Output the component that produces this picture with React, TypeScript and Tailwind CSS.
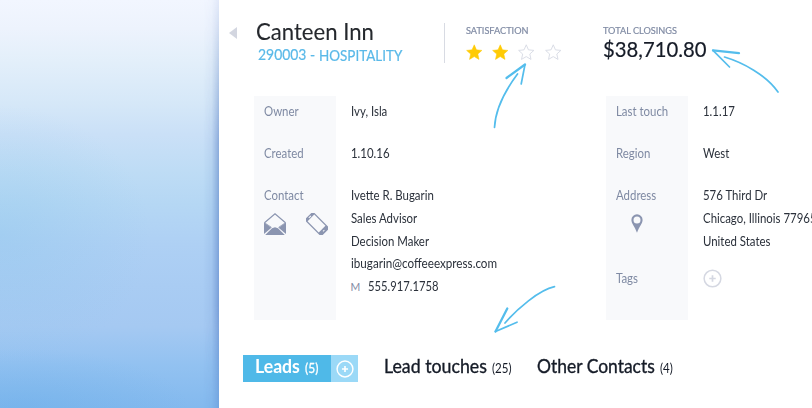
import React from "react";

const STAR = "M12 1.2l3.2 7.3 7.9.8-5.9 5.3 1.7 7.8L12 18.3l-6.9 4.1 1.7-7.8L.9 9.3l7.9-.8z";

function Star({ filled }: { filled?: boolean }) {
  return (
    <svg viewBox="0 0 24 24" className="size-[16.5px] shrink-0">
      <path
        d={STAR}
        fill={filled ? "#ffcb05" : "#fff"}
        stroke={filled ? "#ffcb05" : "#d9dce5"}
        strokeWidth={filled ? 0.8 : 1.4}
      />
    </svg>
  );
}

function PlusCircle({ className }: { className: string }) {
  return (
    <svg viewBox="0 0 20 20" fill="none" stroke="currentColor" className={className}>
      <circle cx="10" cy="10" r="8.8" strokeWidth="1.6" />
      <path d="M10 6.600v6.800M6.600 10h6.800" strokeWidth="1.8" />
    </svg>
  );
}

function Envelope() {
  return (
    <svg viewBox="0 0 22 22" className="size-[22px]" fill="#8b95b0">
      <path d="M.5 9.700 11 .8l10.500 8.900" fill="none" stroke="#8b95b0" strokeWidth="1.200" />
      <path d="M0 9.500v11.500l7.400-6.300zM22 9.500v11.500l-7.400-6.300z" />
      <path d="M1.200 21.900 8 15.300l3-1 3 1 6.800 6.600z" />
      <path d="M.5 9.700 7.500 14.400M21.500 9.700l-7 4.700" fill="none" stroke="#8b95b0" strokeWidth=".8" />
    </svg>
  );
}

function Phone() {
  return (
    <svg viewBox="0 0 22 22" className="size-[22px]">
      <g transform="rotate(-45 11 11)">
        <rect x="5" y="-.8" width="12" height="23.600" rx="2.200" fill="#8b95b0" />
        <rect x="6.300" y="2.400" width="9.400" height="15.800" fill="#f8f9fb" />
        <path d="M9.500 .9h3M10 20.500h2" stroke="#f8f9fb" strokeWidth="1" />
      </g>
    </svg>
  );
}

function Pin() {
  return (
    <svg viewBox="0 0 12 19" className="h-[19px] w-[12px]">
      <path
        fillRule="evenodd"
        fill="#8b95b0"
        d="M6 .3a5.600 5.600 0 0 1 5.600 5.700C11.600 9.500 8 13 6 18.700 4 13 .4 9.500.4 6A5.600 5.600 0 0 1 6 .3zm0 2.200a3.500 3.500 0 1 0 0 7 3.500 3.500 0 0 0 0-7z"
      />
    </svg>
  );
}

function Arrows() {
  return (
    <svg
      viewBox="0 0 812 408"
      className="pointer-events-none absolute top-0 left-0 h-[408px] w-[812px]"
      fill="none"
      stroke="#54bdec"
      strokeWidth="1.700"
      strokeLinecap="round"
      strokeLinejoin="round"
    >
      <path d="M494.500 127.500C495.500 108 507 88 517.500 74" />
      <path d="M521.200 84 525 64.500" />
      <path d="M525 64.500 506.500 78" strokeWidth="2.200" />
      <path d="M778 92C766 75 743 62.500 724.500 57" />
      <path d="M729.500 67 713 50.300" />
      <path d="M713 50.300 739 53.200" strokeWidth="2.300" />
      <path d="M554.500 286.700C539 290 517 309 505 323" />
      <path d="M517 322.200 495.500 331.500" />
      <path d="M495.500 331.500 507.300 308.500" strokeWidth="2.300" />
    </svg>
  );
}

/** Condensed run of text; pass a scale-x class to change how narrow it is. */
function Text({ children, scale = "scale-x-[0.9]", className = "" }: { children: string; scale?: string; className?: string }) {
  return <span className={`block w-fit origin-left whitespace-nowrap ${scale} ${className}`}>{children}</span>;
}

function Row({ label, children, className = "" }: { label: React.ReactNode; children: React.ReactNode; className?: string }) {
  return (
    <div className={`flex ${className}`}>
      <div className="w-[97px] shrink-0 pl-[10px] text-[#7f8aa3]">{label}</div>
      <div className="w-0 text-[#2b313b]">{children}</div>
    </div>
  );
}

export default function App() {
  return (
    <div className="relative flex h-[408px] w-[812px] overflow-hidden bg-white font-['Lato',sans-serif] text-[12.7px] leading-[22.8px]">
      <aside className="flex w-[219px] shrink-0 justify-end bg-[radial-gradient(150px_130px_at_0_235px,#86c5ea50,transparent),radial-gradient(170px_60px_at_20px_408px,#5fa9e650,transparent),linear-gradient(180deg,#f2f6ff_0%,#edf3fd_7%,#e3effa_15%,#d6e8f8_25%,#cae0f7_33%,#bedcf5_42%,#b5d7f4_50%,#aed0f4_60%,#a9ccf3_70%,#a5c9f2_80%,#93c2f1_89%,#83b9ee_100%)]">
        <div className="w-[16px] bg-[linear-gradient(90deg,transparent,#426fbf18_55%,#3f68b870)] [mask-image:linear-gradient(180deg,#0003,#000_35%,#000_75%,#0008)]" />
      </aside>

      <main className="flex w-[593px] shrink-0 flex-col">
        <header className="flex h-[96px] shrink-0 pt-[18px]">
          <div className="flex w-[225px] shrink-0">
            <div className="mt-[9px] ml-[10px] size-0 border-y-[6px] border-r-[8px] border-y-transparent border-r-[#d3d6e0]" />
            <div className="ml-[19px]">
              <h1 className="text-[22.8px] leading-[27px] text-[#25282d] [-webkit-text-stroke:0.1px_#25282d]">
                <Text scale="scale-x-[0.97]">Canteen Inn</Text>
              </h1>
              <p className="flex h-[20px] pl-[1.5px] text-[14.800px] leading-[20px] text-[#5ab9e8] [-webkit-text-stroke:0.2px_#5ab9e8]">
                <span className="w-[61px]">
                  <Text scale="scale-x-[0.94]" className="-mt-[1px]">290003 -</Text>
                </span>
                <Text scale="scale-x-[0.91]">HOSPITALITY</Text>
              </p>
            </div>
          </div>
          <div className="mt-[5px] h-[40px] w-px bg-[#d8dbe3]" />
          <div className="ml-[20.500px] w-[137.500px]">
            <div className="h-[24px] text-[10.200px] leading-[24px] text-[#7f8aa3] [-webkit-text-stroke:0.2px_#7f8aa3]">
              <Text scale="scale-x-[0.9]">SATISFACTION</Text>
            </div>
            <div className="mt-[2px] flex gap-[9.900px]">
              <Star filled />
              <Star filled />
              <Star />
              <Star />
            </div>
          </div>
          <div>
            <div className="h-[24px] text-[10.200px] leading-[24px] text-[#7f8aa3] [-webkit-text-stroke:0.2px_#7f8aa3]">
              <Text scale="scale-x-[0.9]">TOTAL CLOSINGS</Text>
            </div>
            <div className="-mt-[5px] text-[20.800px] leading-[24px] text-[#151b27] [-webkit-text-stroke:0.2px_#151b27]">
              <Text scale="scale-x-[0.975]">$38,710.80</Text>
            </div>
          </div>
        </header>

        <section className="ml-[34.500px] flex h-[224px] shrink-0">
          <div className="w-[352px] shrink-0 bg-[linear-gradient(90deg,#f8f9fb_82px,transparent_82px)] pt-[4px]">
            <Row label={<Text>Owner</Text>} className="h-[42px]"><Text>Ivy, Isla</Text></Row>
            <Row label={<Text>Created</Text>} className="h-[42px]"><Text>1.10.16</Text></Row>
            <Row
              label={
                <>
                  <Text>Contact</Text>
                  <div className="mt-[6px] flex gap-[20px]">
                    <Envelope />
                    <Phone />
                  </div>
                </>
              }
            >
              <Text>Ivette R. Bugarin</Text>
              <Text>Sales Advisor</Text>
              <Text>Decision Maker</Text>
              <Text scale="scale-x-[0.92]">ibugarin@coffeeexpress.com</Text>
              <div className="flex">
                <span className="w-[17.500px] shrink-0 text-[10.500px] leading-[24px] text-[#7f8aa3]">M</span>
                <Text scale="scale-x-[0.885]">555.917.1758</Text>
              </div>
            </Row>
          </div>
          <div className="w-[206.500px] shrink-0 bg-[linear-gradient(90deg,#f8f9fb_82px,transparent_82px)] pt-[4px]">
            <Row label={<Text>Last touch</Text>} className="h-[42px]"><Text>1.1.17</Text></Row>
            <Row label={<Text>Region</Text>} className="h-[42px]"><Text>West</Text></Row>
            <Row
              className="h-[83px]"
              label={
                <>
                  <Text>Address</Text>
                  <div className="mt-[7px] ml-[15px]">
                    <Pin />
                  </div>
                </>
              }
            >
              <Text>576 Third Dr</Text>
              <Text>Chicago, Illinois 77965</Text>
              <Text>United States</Text>
            </Row>
            <Row label={<Text>Tags</Text>}>
              <PlusCircle className="mt-[2px] size-[19px] text-[#d5d8e2]" />
            </Row>
          </div>
        </section>

        <nav className="mt-[35px] ml-[24px] flex h-[27px] shrink-0 text-[18.800px] leading-[22px] text-[#151b27]">
          <div className="flex w-[88px] items-baseline bg-[#4fb9e8] pl-[12px] text-white">
            <span className="w-[49.500px] font-bold"><Text scale="scale-x-[0.94]">Leads</Text></span>
            <Text className="text-[13px] [-webkit-text-stroke:0.3px_#fff]" scale="scale-x-[0.92]">(5)</Text>
          </div>
          <div className="flex w-[27px] items-center justify-center bg-[#9bd9f7] text-white">
            <PlusCircle className="size-[18px]" />
          </div>
          <div className="ml-[26px] flex w-[153px] items-baseline">
            <span className="w-[107.500px] [-webkit-text-stroke:0.35px_#151b27]"><Text scale="scale-x-[0.945]">Lead touches</Text></span>
            <Text className="text-[13px]" scale="scale-x-[0.89]">(25)</Text>
          </div>
          <div className="flex items-baseline">
            <span className="w-[122.500px] [-webkit-text-stroke:0.35px_#151b27]"><Text scale="scale-x-[0.93]">Other Contacts</Text></span>
            <Text className="text-[13px]" scale="scale-x-[0.89]">(4)</Text>
          </div>
        </nav>
      </main>

      <Arrows />
    </div>
  );
}
